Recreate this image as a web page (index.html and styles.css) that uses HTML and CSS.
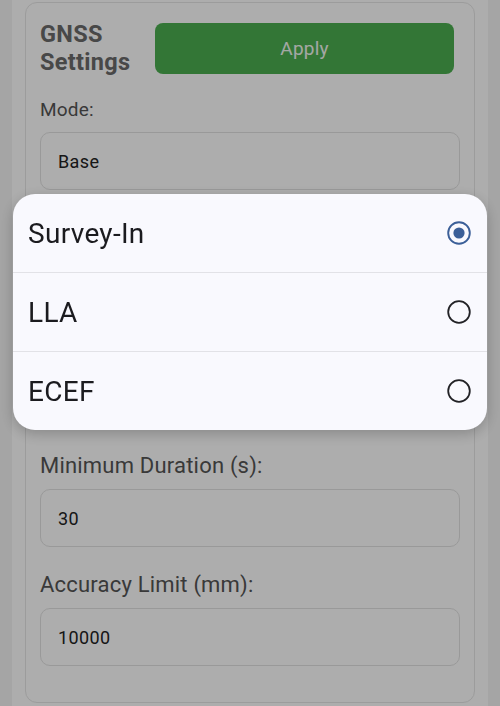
FILE: index.html
```html
<!DOCTYPE html>
<html lang="en">
<head>
<meta charset="utf-8">
<title>GNSS Settings</title>
<link rel="stylesheet" href="styles.css">
</head>
<body>
<div class="page">
  <section class="card">
    <div class="card-head">
      <h2 class="title">GNSS<br>Settings</h2>
      <button class="apply" type="button">Apply</button>
    </div>
    <div class="fields">
      <div class="field field-small">
        <div class="label">Mode:</div>
        <div class="input">Base</div>
      </div>
      <div class="field field-hidden" aria-hidden="true">
        <div class="label label-empty"></div>
        <div class="input"></div>
      </div>
      <div class="field field-hidden" aria-hidden="true">
        <div class="label label-empty"></div>
        <div class="input"></div>
      </div>
      <div class="field">
        <div class="label">Minimum Duration (s):</div>
        <div class="input">30</div>
      </div>
      <div class="field">
        <div class="label">Accuracy Limit (mm):</div>
        <div class="input">10000</div>
      </div>
    </div>
  </section>
</div>
<div class="scrim"></div>
<div class="dialog" role="radiogroup">
  <div class="option">
    <span class="option-text">Survey-In</span>
    <svg class="radio" width="24" height="24" viewBox="0 0 24 24"><circle cx="12" cy="12" r="10.8" fill="none" stroke="#3b5f98" stroke-width="1.9"/><circle cx="12" cy="12" r="5.6" fill="#3b5f98"/></svg>
  </div>
  <div class="option">
    <span class="option-text">LLA</span>
    <svg class="radio" width="24" height="24" viewBox="0 0 24 24"><circle cx="12" cy="12" r="10.8" fill="none" stroke="#222226" stroke-width="1.8"/></svg>
  </div>
  <div class="option">
    <span class="option-text">ECEF</span>
    <svg class="radio" width="24" height="24" viewBox="0 0 24 24"><circle cx="12" cy="12" r="10.8" fill="none" stroke="#222226" stroke-width="1.8"/></svg>
  </div>
</div>
</body>
</html>
```

FILE: styles.css
```css
* { box-sizing: border-box; }

html, body {
  margin: 0;
  padding: 0;
}

body {
  background: #f3f3f3;
  font-family: Roboto, "Liberation Sans", sans-serif;
}

.page {
  margin: 0 12px;
  min-height: 706px;
  background: #ffffff;
  padding: 2px 13px 0;
}

.card {
  border: 1px solid #e6e6e6;
  border-radius: 12px;
  padding: 17px 14px 36px;
}

.card-head {
  display: flex;
  align-items: center;
  height: 56px;
}

.title {
  flex: 0 0 115px;
  margin: 0;
  font-size: 23.5px;
  line-height: 28px;
  font-weight: 700;
  letter-spacing: 0.3px;
  color: #6a6a6a;
}

.apply {
  flex: 1;
  height: 51px;
  margin-right: 6px;
  border: none;
  border-radius: 8px;
  background: #4caf50;
  color: #f2f7f2;
  font-family: Roboto, "Liberation Sans", sans-serif;
  font-size: 19px;
  letter-spacing: 0.2px;
}

.fields {
  display: flex;
  flex-direction: column;
  gap: 25px;
  margin-top: 22px;
}

.field {
  display: flex;
  flex-direction: column;
  gap: 10px;
}

.label {
  font-size: 22px;
  line-height: 26px;
  letter-spacing: 0.2px;
  color: #555555;
}

.label-empty {
  height: 26px;
}

.field-small .label {
  font-size: 19px;
  line-height: 24px;
}

.input {
  height: 58px;
  border: 1px solid #e2e2e2;
  border-radius: 10px;
  padding-left: 17px;
  display: flex;
  align-items: center;
  font-size: 18px;
  letter-spacing: 0.4px;
  color: #222222;
}

.scrim {
  position: fixed;
  inset: 0;
  background: rgba(0, 0, 0, 0.32);
}

.dialog {
  position: fixed;
  top: 194px;
  left: 13px;
  width: 474px;
  background: #f9f9fe;
  border-radius: 22px;
  overflow: hidden;
  box-shadow: 0 4px 14px rgba(0, 0, 0, 0.22);
}

.option {
  height: 78px;
  display: flex;
  align-items: center;
  justify-content: space-between;
  padding: 0 16px 0 15px;
}

.option + .option {
  height: 79px;
  border-top: 1px solid #e2e2e7;
}

.option-text {
  font-size: 28px;
  letter-spacing: 0.3px;
  color: #1b1b1f;
}

.radio {
  display: block;
}
```
